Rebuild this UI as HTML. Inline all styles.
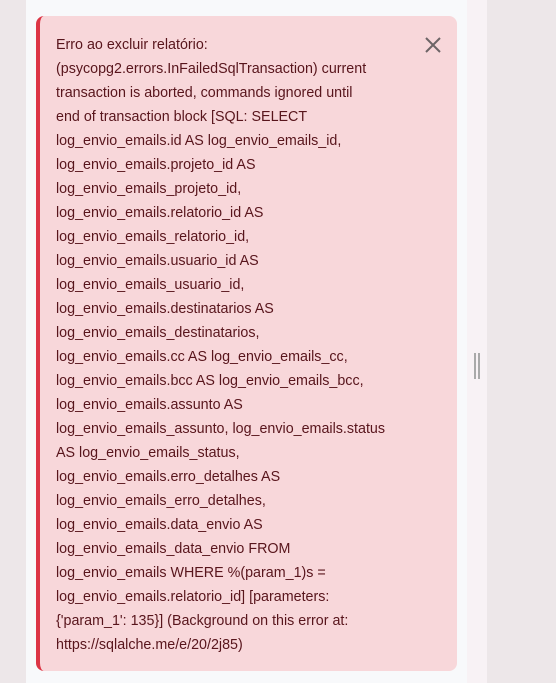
<!DOCTYPE html>
<html><head><meta charset="utf-8"><style>
html,body{margin:0;padding:0;width:556px;height:683px;overflow:hidden;background:#ede7e9;font-family:"Liberation Sans",sans-serif}
.left{position:absolute;left:0;top:0;width:26px;height:683px;background:#ede7e9}
.panel{position:absolute;left:26px;top:0;width:441px;height:683px;background:#f8f9fb}
.strip{position:absolute;left:467px;top:0;width:20px;height:683px;background:#f8f2f5}
.grip{position:absolute;top:353px;width:2px;height:26px;background:#a9a9a9}
.alert{position:absolute;left:36px;top:16px;width:421px;height:655px;box-sizing:border-box;background:#f8d7da;border-left:4px solid #dc3545;border-radius:8px;padding:17px 0 0 16px;color:#58151c;font-size:14.3px;line-height:24px;white-space:nowrap}
.x{position:absolute;left:424px;top:36px}
</style></head><body>
<div class="left"></div><div class="panel"></div><div class="strip"></div>
<div class="grip" style="left:474px"></div><div class="grip" style="left:478px"></div>
<div class="alert">Erro ao excluir relatório:<br>(psycopg2.errors.InFailedSqlTransaction) current<br>transaction is aborted, commands ignored until<br>end of transaction block [SQL: SELECT<br>log_envio_emails.id AS log_envio_emails_id,<br>log_envio_emails.projeto_id AS<br>log_envio_emails_projeto_id,<br>log_envio_emails.relatorio_id AS<br>log_envio_emails_relatorio_id,<br>log_envio_emails.usuario_id AS<br>log_envio_emails_usuario_id,<br>log_envio_emails.destinatarios AS<br>log_envio_emails_destinatarios,<br>log_envio_emails.cc AS log_envio_emails_cc,<br>log_envio_emails.bcc AS log_envio_emails_bcc,<br>log_envio_emails.assunto AS<br>log_envio_emails_assunto, log_envio_emails.status<br>AS log_envio_emails_status,<br>log_envio_emails.erro_detalhes AS<br>log_envio_emails_erro_detalhes,<br>log_envio_emails.data_envio AS<br>log_envio_emails_data_envio FROM<br>log_envio_emails WHERE %(param_1)s =<br>log_envio_emails.relatorio_id] [parameters:<br>{'param_1': 135}] (Background on this error at:<br>https://sqlalche.me/e/20/2j85)</div>
<svg class="x" width="18" height="18" viewBox="0 0 18 18"><path d="M2 2L16 16M16 2L2 16" stroke="#6d6466" stroke-width="2" fill="none"/></svg>
</body></html>
